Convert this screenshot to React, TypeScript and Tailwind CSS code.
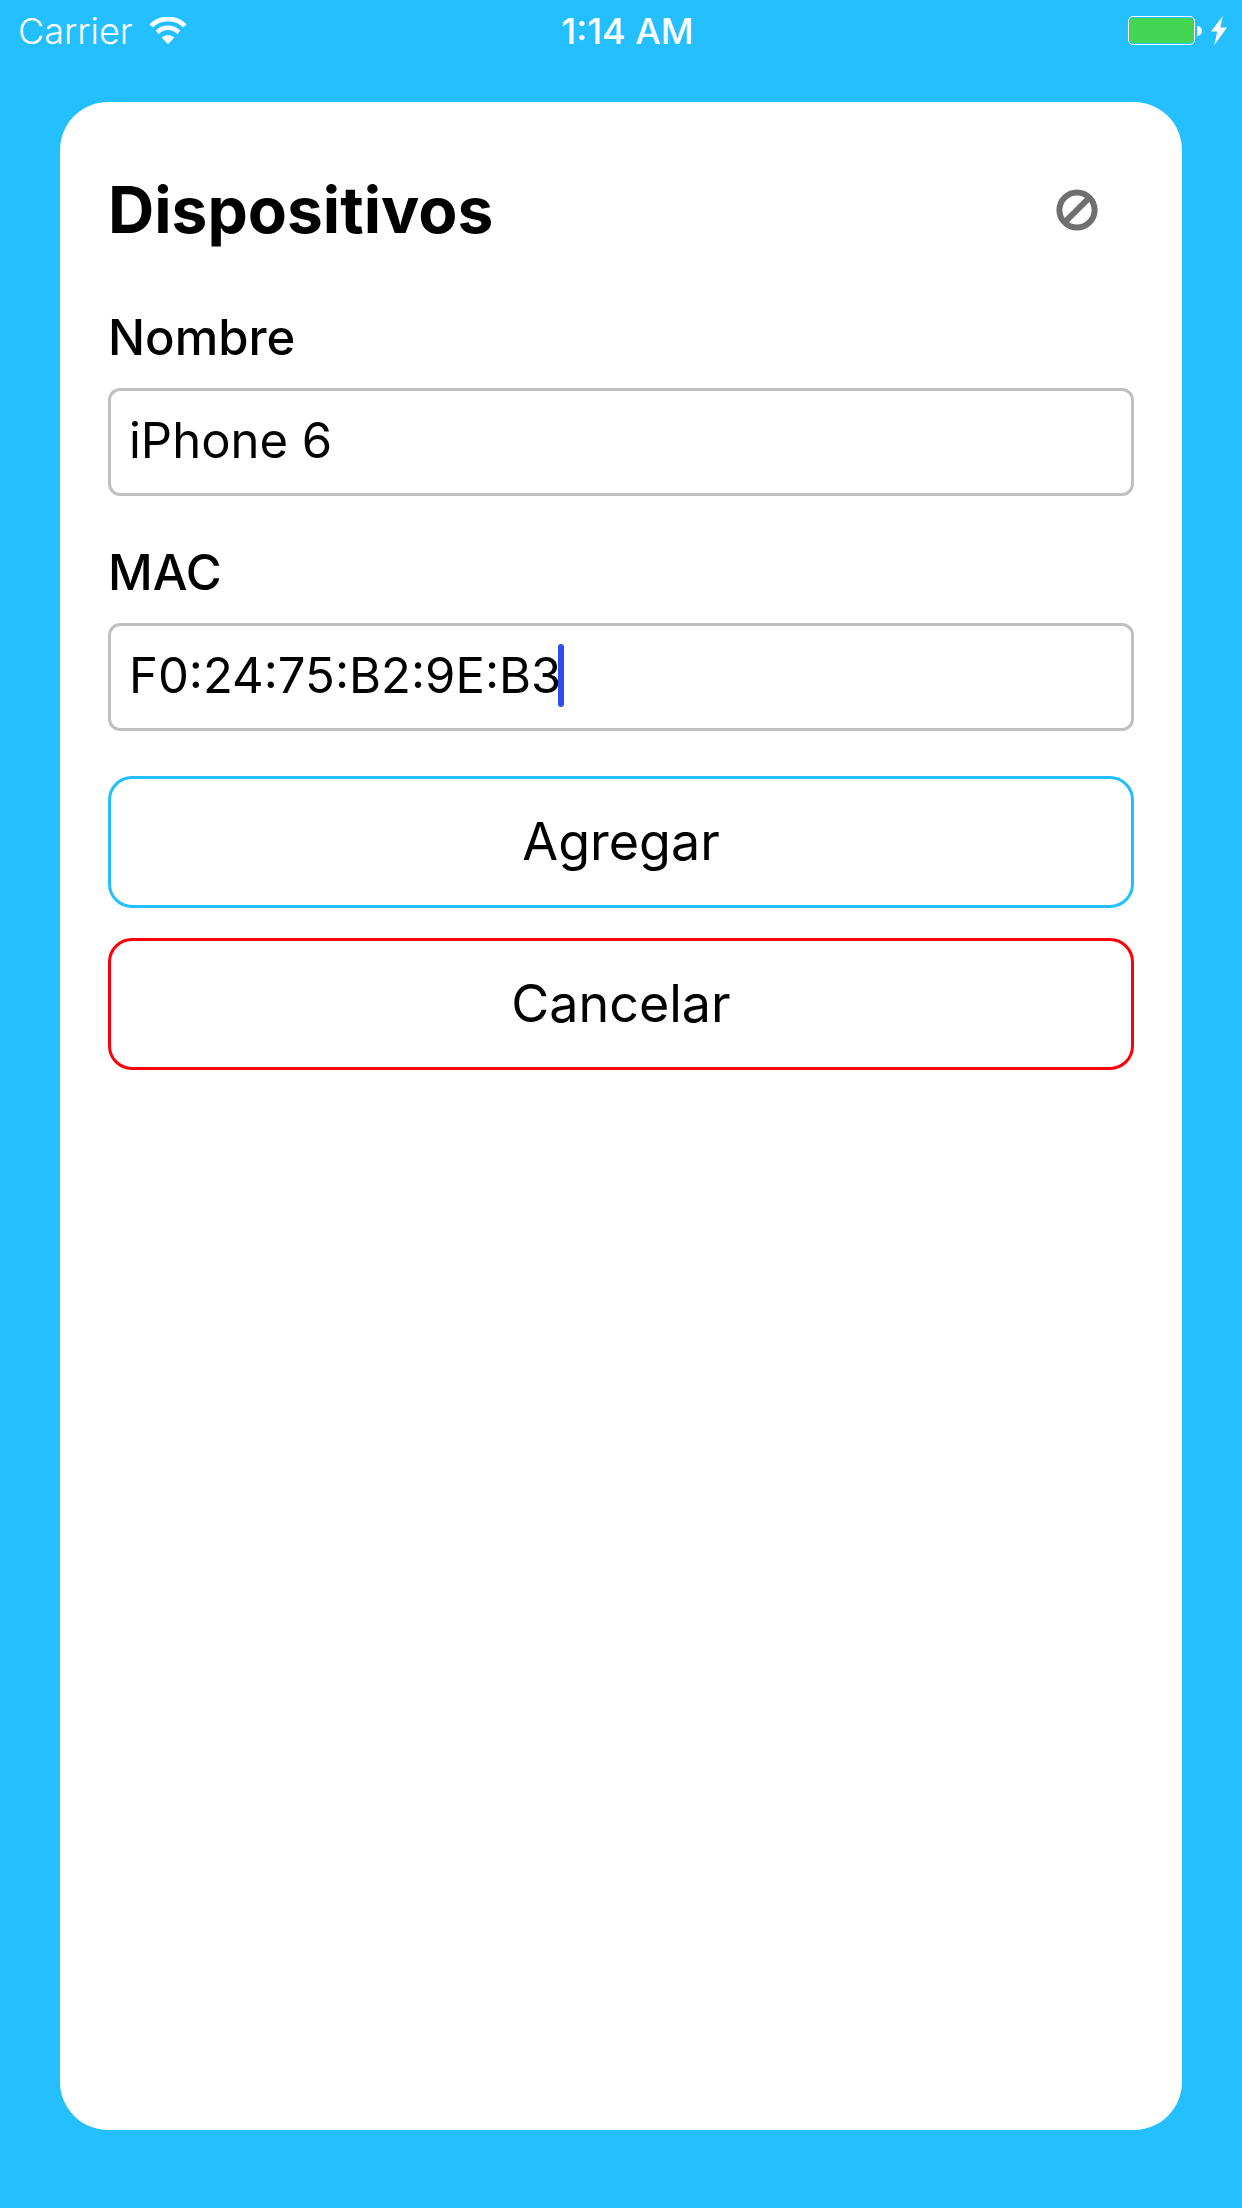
import { useState } from "react";

function WifiIcon() {
  return (
    <svg viewBox="0 0 38 28" className="h-7 w-[38px]" fill="none" aria-hidden="true">
      <path d="M2.2 8.9 A23.5 23.5 0 0 1 35.8 8.9" stroke="white" strokeWidth="4.6" />
      <path d="M8.2 15.3 A15 15 0 0 1 29.8 15.3" stroke="white" strokeWidth="4.6" />
      <path d="M19 27.2 L12.6 20.6 A9 9 0 0 1 25.4 20.6 Z" fill="white" />
    </svg>
  );
}

function BatteryIcon() {
  return (
    <svg viewBox="0 0 74 30" className="h-[30px] w-[74px]" fill="none" aria-hidden="true">
      <rect x="0.5" y="0.5" width="66" height="28" rx="4.5" stroke="white" />
      <rect x="2" y="2" width="63" height="25" rx="3.5" fill="#44d553" />
      <path d="M69 10 A5 5 0 0 1 69 20 Z" fill="white" />
    </svg>
  );
}

function BoltIcon() {
  return (
    <svg viewBox="0 0 16 30" className="h-[30px] w-4" fill="white" aria-hidden="true">
      <path d="M11.8 0 L0 15.6 L6.2 15.6 L3.4 29 L16 11.6 L9.4 11.6 Z" />
    </svg>
  );
}

function BanIcon() {
  return (
    <svg viewBox="0 0 42 42" className="size-[42px]" fill="none" stroke="#6f6f6f" strokeWidth="6" aria-hidden="true">
      <circle cx="21" cy="21" r="17.6" />
      <path d="M8.8 33.2 L33.2 8.8" />
    </svg>
  );
}

const inputStyle =
  "block h-[108px] w-full rounded-xl border-3 border-[#c0c0c0] bg-white px-[18px] pb-1 text-[49px] text-black outline-none";
const labelStyle = "block text-[49px] leading-[60px] font-medium";
const buttonStyle = "h-[132px] w-full rounded-3xl border-3 bg-white text-[52px] text-black";

export default function App() {
  const [name, setName] = useState("iPhone 6");
  const [mac, setMac] = useState("F0:24:75:B2:9E:B3");

  return (
    <div className="flex min-h-screen flex-col bg-[#23bfff] font-['Inter',sans-serif] text-black">
      <header className="grid h-[62px] grid-cols-3 items-center pr-[15px] pl-[18px] text-[36px] leading-none text-white">
        <div className="flex items-center gap-4">
          <span className="font-light">Carrier</span>
          <WifiIcon />
        </div>
        <time className="pl-2.5 text-center font-medium">1:14 AM</time>
        <div className="flex items-center justify-end gap-[9px]">
          <BatteryIcon />
          <BoltIcon />
        </div>
      </header>

      <main className="mx-[60px] mt-10 mb-[78px] flex-1 rounded-[48px] bg-white px-12 pt-[68px]">
        <div className="flex items-center justify-between pr-9">
          <h1 className="text-[64px] leading-[80px] font-bold">Dispositivos</h1>
          <button type="button" aria-label="Cerrar">
            <BanIcon />
          </button>
        </div>

        <form onSubmit={(e) => e.preventDefault()}>
          <div className="mt-[58px]">
            <label htmlFor="name" className={labelStyle}>Nombre</label>
            <input id="name" className={`${inputStyle} mt-5`} value={name} onChange={(e) => setName(e.target.value)} />
          </div>

          <div className="mt-[47px]">
            <label htmlFor="mac" className={labelStyle}>MAC</label>
            <div className="relative mt-5">
              <input id="mac" className={inputStyle} value={mac} onChange={(e) => setMac(e.target.value)} />
              <span className="absolute top-[21px] left-[450px] h-[63px] w-1.5 rounded-full bg-[#304ef0]" />
            </div>
          </div>

          <div className="mt-[45px] flex flex-col gap-[30px]">
            <button type="submit" className={`${buttonStyle} border-[#23bfff]`}>Agregar</button>
            <button type="button" className={`${buttonStyle} border-[#ff0008]`}>Cancelar</button>
          </div>
        </form>
      </main>
    </div>
  );
}
